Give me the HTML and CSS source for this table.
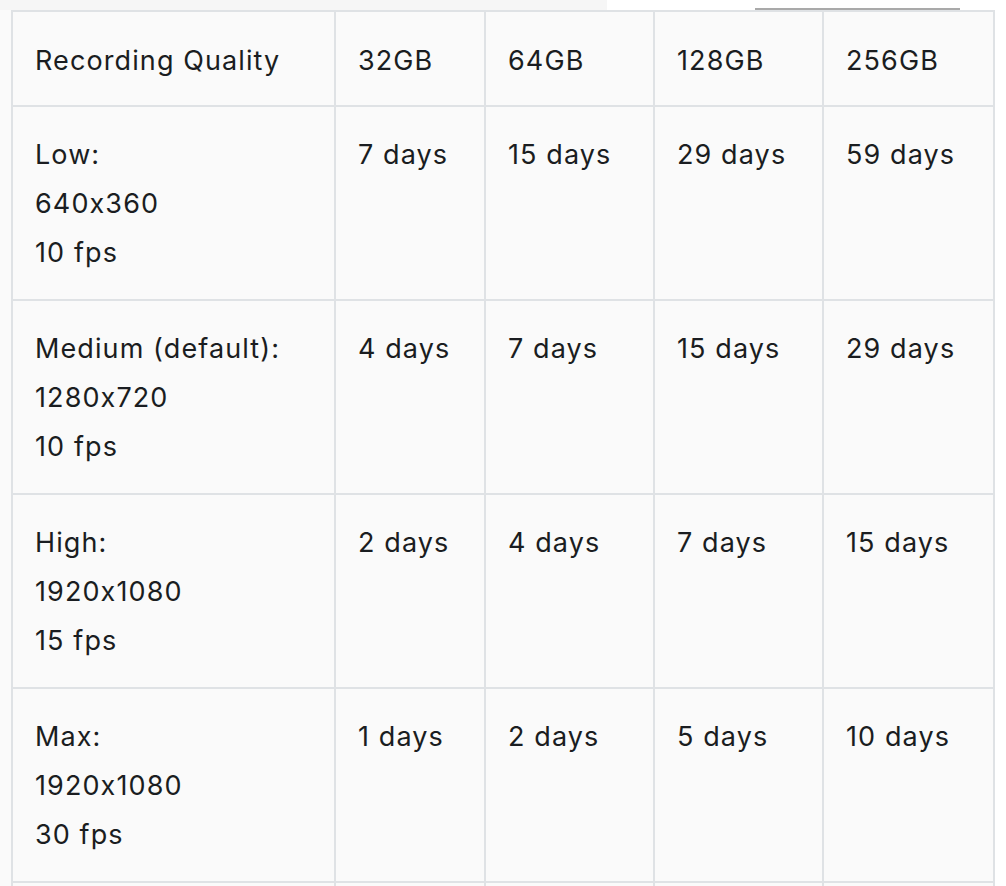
FILE: index.html
```html
<!DOCTYPE html>
<html>
<head>
<meta charset="utf-8">
<link rel="stylesheet" href="styles.css">
</head>
<body>
<div class="topbar">
  <div class="top-left"></div>
  <div class="top-mid"></div>
  <div class="top-line"></div>
  <div class="top-right"></div>
</div>
<div class="wrap">
<table class="grid">
  <colgroup>
    <col class="c1"><col class="c2"><col class="c3"><col class="c4"><col class="c5">
  </colgroup>
  <thead>
    <tr><th>Recording Quality</th><th>32GB</th><th>64GB</th><th>128GB</th><th>256GB</th></tr>
  </thead>
  <tbody>
    <tr><td>Low:<br>640x360<br>10 fps</td><td>7 days</td><td>15 days</td><td>29 days</td><td>59 days</td></tr>
    <tr><td>Medium (default):<br>1280x720<br>10 fps</td><td>4 days</td><td>7 days</td><td>15 days</td><td>29 days</td></tr>
    <tr><td>High:<br>1920x1080<br>15 fps</td><td>2 days</td><td>4 days</td><td>7 days</td><td>15 days</td></tr>
    <tr><td>Max:<br>1920x1080<br>30 fps</td><td>1 days</td><td>2 days</td><td>5 days</td><td>10 days</td></tr>
    <tr class="cut"><td></td><td></td><td></td><td></td><td></td></tr>
  </tbody>
</table>
<div class="side"></div>
</div>
</body>
</html>
```
FILE: styles.css
```css
html, body {
  margin: 0;
  padding: 0;
  background: #fafafa;
  overflow: hidden;
}
body {
  width: 1006px;
  height: 886px;
  font-family: "Inter", "Roboto", sans-serif;
  font-feature-settings: "calt" 0;
  color: #1a1d21;
}
.topbar {
  display: flex;
  height: 10px;
}
.top-left {
  width: 607px;
  background: #f6f6f6;
}
.top-mid {
  width: 148px;
  background: #ffffff;
}
.top-line {
  width: 205px;
  background: linear-gradient(to bottom, #ffffff 0, #ffffff 8px, #a9a9a9 8px, #a9a9a9 10px);
}
.top-right {
  flex: 1;
  background: #ffffff;
}
.wrap {
  display: flex;
  padding-left: 11px;
}
.side {
  flex: 1;
  background: #ffffff;
  margin-top: -10px;
}
.grid {
  border-collapse: collapse;
  width: 982px;
  table-layout: fixed;
  background: #fafafa;
  font-size: 27px;
  line-height: 49px;
  letter-spacing: 1.1px;
}
.c1 { width: 323px; }
.c2 { width: 150px; }
.c3 { width: 169px; }
.c4 { width: 169px; }
.c5 { width: 171px; }
.grid th, .grid td {
  border: 2px solid #dfe2e5;
  padding: 23px 22px 22px 22px;
  text-align: left;
  vertical-align: top;
  font-weight: 400;
}
.grid th {
  padding-top: 24px;
  padding-bottom: 20px;
}
.grid tr.cut td {
  height: 40px;
  padding: 0;
}
```
